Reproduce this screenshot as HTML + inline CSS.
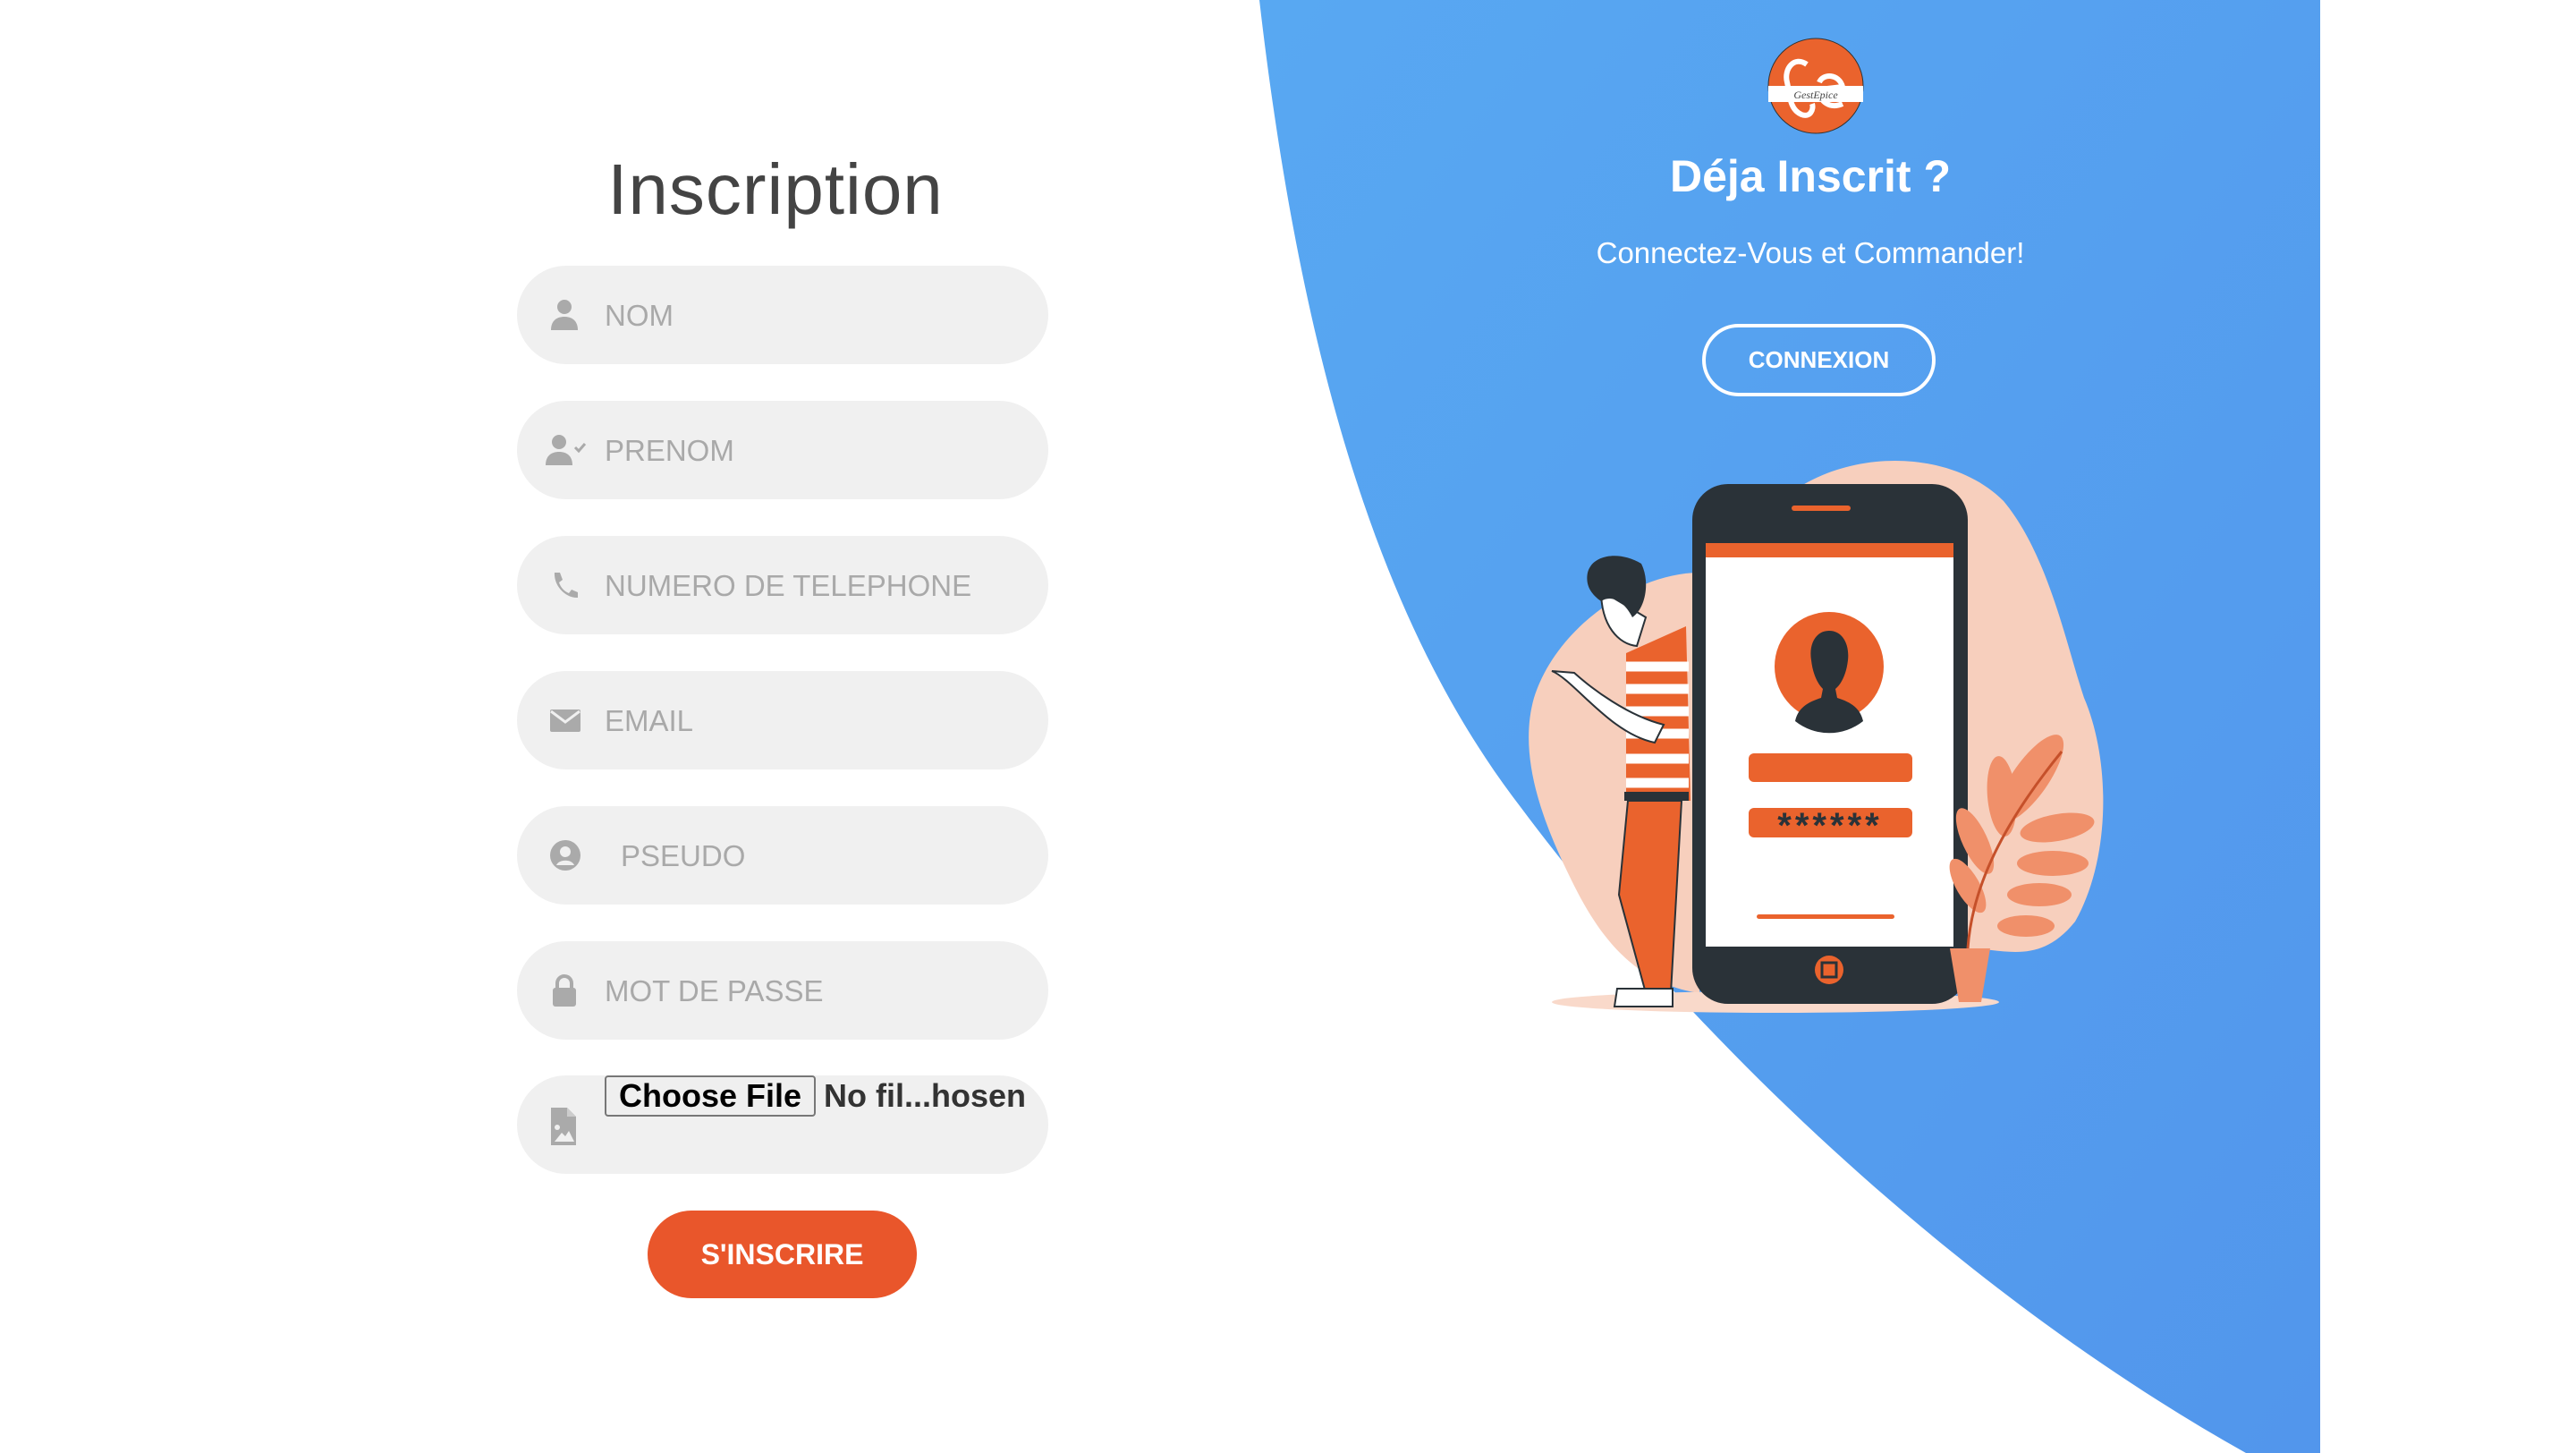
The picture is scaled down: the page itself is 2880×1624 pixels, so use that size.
<!DOCTYPE html>
<html><head><meta charset="utf-8"><style>
*{margin:0;padding:0;box-sizing:border-box}
body{width:2880px;height:1624px;background:#fff;position:relative;overflow:hidden;font-family:"Liberation Sans",sans-serif}
.bg{position:absolute;left:0;top:0}
h1{position:absolute;left:570px;width:594px;top:166px;text-align:center;font-size:80px;font-weight:500;color:#444;letter-spacing:1px}
.pill{position:absolute;left:578px;width:594px;height:110px;border-radius:55px;background:#f0f0f0}
.pill svg{position:absolute;left:36px;top:37px}
.pill span{position:absolute;left:98px;top:37px;font-size:33px;color:#a9a9a9;font-weight:500}
.btn{position:absolute;left:724px;top:1353px;width:301px;height:98px;border-radius:49px;background:#e9562b;color:#fff;font-weight:bold;font-size:32px;text-align:center;line-height:98px}
.file{position:absolute;left:676px;top:1202px;width:236px;height:46px;border:2px solid #777;border-radius:4px;background:#efefef;font-size:36px;font-weight:bold;text-align:center;line-height:42px;color:#000}
.nofile{position:absolute;left:921px;top:1202px;font-size:36px;font-weight:bold;color:#333;line-height:46px}
.w{position:absolute;color:#fff;text-align:center;width:700px;left:1674px}
.cx{position:absolute;left:1903px;top:362px;width:261px;height:81px;border:4px solid #fff;border-radius:41px;color:#fff;font-weight:bold;font-size:26px;text-align:center;line-height:73px}
</style></head><body>
<svg class="bg" width="2880" height="1624" viewBox="0 0 2880 1624">
<defs><linearGradient id="g" x1="0" y1="0" x2="1" y2="1"><stop offset="0" stop-color="#58a8f2"/><stop offset="1" stop-color="#5296ec"/></linearGradient></defs>
<path d="M1408,0 C1460,450 1560,720 1700,902 C1900,1170 2200,1450 2511,1624 L2594,1624 L2594,0 Z" fill="url(#g)"/>
<path d="M1990,560 C2060,500 2180,500 2240,560 C2290,620 2310,720 2330,780 C2360,850 2360,960 2320,1030 C2280,1080 2240,1060 2200,1060 L1900,1060 L1900,620 Z" fill="#f7cfbd"/>
<path d="M1900,640 C1830,640 1740,700 1715,780 C1695,850 1730,930 1760,990 C1790,1050 1830,1100 1900,1110 Z" fill="#f7cfbd"/>
<ellipse cx="1985" cy="1120" rx="250" ry="12" fill="#f9d9ca"/>
<rect x="1892" y="541" width="308" height="581" rx="40" fill="#2a3238"/>
<rect x="1907" y="607" width="277" height="451" fill="#fff"/>
<rect x="1907" y="607" width="277" height="16" fill="#ea632d"/>
<rect x="2003" y="565" width="66" height="6" rx="3" fill="#ea632d"/>
<circle cx="2045" cy="745" r="61" fill="#ea632d"/>
<path d="M2045,705 C2030,705 2022,720 2025,738 C2027,755 2033,765 2038,770 L2036,780 C2020,785 2010,792 2007,806 A61,61 0 0 0 2083,806 C2080,792 2070,785 2054,780 L2052,770 C2058,765 2064,755 2066,738 C2068,720 2060,705 2045,705Z" fill="#2a3238"/>
<rect x="1955" y="842" width="183" height="32" rx="6" fill="#ea632d"/>
<rect x="1955" y="903" width="183" height="33" rx="6" fill="#ea632d"/>
<text x="2046" y="936" text-anchor="middle" font-family="Liberation Sans" font-size="40" font-weight="bold" fill="#2a3238" letter-spacing="4">******</text>
<rect x="1964" y="1022" width="154" height="5" rx="2.5" fill="#ea632d"/>
<circle cx="2045" cy="1084" r="16" fill="#ea632d"/>
<rect x="2037" y="1076" width="16" height="16" fill="none" stroke="#2a3238" stroke-width="3"/>
<g fill="#f0906a">
<ellipse cx="2270" cy="870" rx="20" ry="58" transform="rotate(35 2270 870)"/>
<ellipse cx="2238" cy="890" rx="16" ry="45" transform="rotate(-5 2238 890)"/>
<ellipse cx="2300" cy="925" rx="42" ry="15" transform="rotate(-10 2300 925)"/>
<ellipse cx="2295" cy="965" rx="40" ry="14"/>
<ellipse cx="2280" cy="1000" rx="36" ry="13"/>
<ellipse cx="2265" cy="1035" rx="32" ry="12"/>
<ellipse cx="2208" cy="940" rx="14" ry="40" transform="rotate(-25 2208 940)"/>
<ellipse cx="2200" cy="990" rx="13" ry="34" transform="rotate(-30 2200 990)"/>
<path d="M2180,1060 L2225,1060 L2215,1120 L2190,1120 Z"/>
</g>
<path d="M2200,1060 C2205,990 2240,920 2305,840" stroke="#c5502a" stroke-width="3" fill="none"/>
<path d="M1818,730 L1885,700 L1890,895 L1818,895 Z" fill="#ea632d"/>
<g stroke="#fff" stroke-width="11"><line x1="1818" y1="745" x2="1888" y2="745"/><line x1="1818" y1="770" x2="1888" y2="770"/><line x1="1818" y1="795" x2="1888" y2="795"/><line x1="1818" y1="820" x2="1888" y2="820"/><line x1="1818" y1="848" x2="1888" y2="848"/><line x1="1818" y1="875" x2="1888" y2="875"/></g>
<rect x="1816" y="885" width="72" height="10" fill="#2a3238"/>
<path d="M1820,895 L1880,895 L1868,1110 L1840,1110 L1810,1000 Z" fill="#ea632d" stroke="#2a3238" stroke-width="2"/>
<path d="M1808,1105 L1870,1105 L1870,1125 L1805,1125 Z" fill="#fff" stroke="#2a3238" stroke-width="2"/>
<path d="M1735,750 C1760,760 1800,820 1850,830 L1860,810 C1820,800 1780,770 1760,752 Z" fill="#fff" stroke="#2a3238" stroke-width="2"/>
<path d="M1790,660 C1790,700 1810,720 1830,722 L1840,690 Z" fill="#fff" stroke="#2a3238" stroke-width="2"/>
<path d="M1775,640 C1780,620 1810,615 1835,630 C1845,650 1840,680 1825,690 C1815,670 1800,665 1790,672 C1780,665 1772,655 1775,640Z" fill="#2a3238"/>
</svg>

<h1>Inscription</h1>

<div class="pill" style="top:297px"><svg width="34" height="36" viewBox="0 0 34 36"><circle cx="17" cy="9" r="8" fill="#aaa"/><path d="M2,35 C2,24 9,20 17,20 C25,20 32,24 32,35 Z" fill="#aaa"/></svg><span>NOM</span></div>
<div class="pill" style="top:448px"><svg width="46" height="36" viewBox="0 0 46 36" style="left:32px"><circle cx="15" cy="9" r="8" fill="#aaa"/><path d="M0,35 C0,24 7,20 15,20 C23,20 30,24 30,35 Z" fill="#aaa"/><path d="M33,15 l4,4 l7,-8" stroke="#aaa" stroke-width="3" fill="none"/></svg><span>PRENOM</span></div>
<div class="pill" style="top:599px"><svg width="34" height="36" viewBox="0 0 34 36"><path d="M6,4 L12,4 L15,12 L11,15 C13,21 17,25 22,27 L25,23 L32,26 L32,32 C20,33 5,20 6,4Z" fill="#aaa"/></svg><span>NUMERO DE TELEPHONE</span></div>
<div class="pill" style="top:750px"><svg width="36" height="36" viewBox="0 0 36 36"><rect x="1" y="6" width="34" height="25" rx="2" fill="#aaa"/><path d="M2,8 L18,20 L34,8" stroke="#f0f0f0" stroke-width="3" fill="none"/></svg><span>EMAIL</span></div>
<div class="pill" style="top:901px"><svg width="36" height="36" viewBox="0 0 36 36"><circle cx="18" cy="18" r="17" fill="#aaa"/><circle cx="18" cy="14" r="6" fill="#f0f0f0"/><path d="M8,29 C11,22 25,22 28,29 Z" fill="#f0f0f0"/></svg><span style="left:116px">PSEUDO</span></div>
<div class="pill" style="top:1052px"><svg width="34" height="36" viewBox="0 0 34 36"><path d="M9,16 V10 A8,8 0 0 1 25,10 V16" stroke="#aaa" stroke-width="4" fill="none"/><rect x="4" y="15" width="26" height="21" rx="3" fill="#aaa"/></svg><span>MOT DE PASSE</span></div>
<div class="pill" style="top:1202px"><svg width="34" height="46" viewBox="0 0 34 46" style="top:34px"><path d="M2,2 L20,2 L30,12 L30,44 L2,44 Z" fill="#aaa"/><path d="M20,2 L20,12 L30,12" fill="#ccc"/><circle cx="9" cy="24" r="3" fill="#f0f0f0"/><path d="M6,40 L14,30 L18,34 L22,28 L28,40 Z" fill="#f0f0f0"/></svg></div>
<div class="file">Choose File</div>
<div class="nofile">No fil...hosen</div>
<div class="btn">S'INSCRIRE</div>

<svg style="position:absolute;left:1976px;top:42px" width="108" height="108" viewBox="0 0 108 108"><circle cx="54" cy="54" r="53" fill="#ea632d" stroke="#333" stroke-width="1"/><rect x="1" y="54" width="106" height="18" fill="#fff"/><path d="M44,30 C30,20 18,35 22,50 C25,62 24,80 38,86 C48,90 52,80 50,74 M58,50 C62,40 80,40 84,55 L58,58 C58,72 70,80 84,74" stroke="#fff" stroke-width="6" fill="none"/><text x="54" y="68" text-anchor="middle" font-size="12" font-style="italic" fill="#444" font-family="Liberation Serif">GestEpice</text></svg>
<div class="w" style="top:168px;font-size:50px;font-weight:bold">Déja Inscrit ?</div>
<div class="w" style="top:264px;font-size:33px">Connectez-Vous et Commander!</div>
<div class="cx">CONNEXION</div>
</body></html>
